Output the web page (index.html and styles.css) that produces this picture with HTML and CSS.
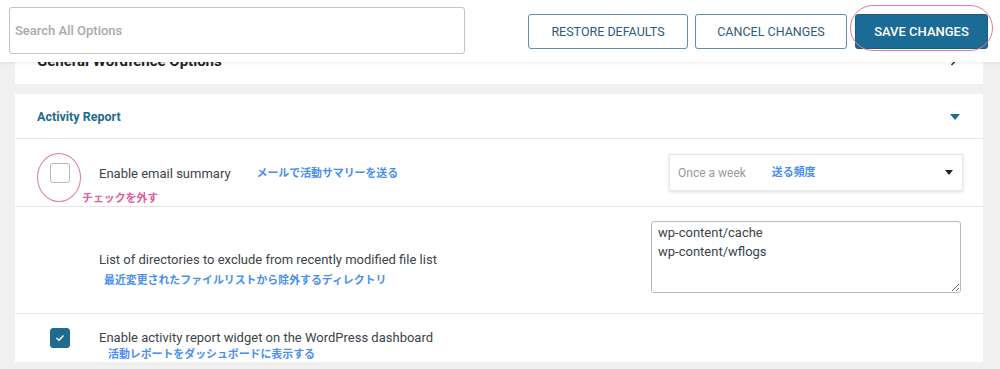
FILE: index.html
```html
<!DOCTYPE html>
<html lang="en">
  <head>
    <meta charset="UTF-8" />
    <meta name="viewport" content="width=device-width, initial-scale=1.0" />
    <title>Wordfence Options</title>
    <link rel="stylesheet" href="styles.css">
  </head>
  <body>
    <header class="topbar">
      <input class="search" type="text" placeholder="Search All Options" />
      <div class="actions">
        <button class="btn btn-restore">RESTORE DEFAULTS</button>
        <button class="btn btn-cancel">CANCEL CHANGES</button>
        <div class="save-wrap">
          <button class="btn btn-save">SAVE CHANGES</button>
          <span class="ring ring-save"></span>
        </div>
      </div>
    </header>

    <main class="content">
      <section class="card card-peek">
        <div class="peek-title">
          <span>General Wordfence Options</span>
          <svg class="chevron" width="8" height="12" viewBox="0 0 8 12"><path d="M1.5 1 L6.5 6 L1.5 11" fill="none" stroke="#333" stroke-width="1.6"/></svg>
        </div>
      </section>

      <section class="card">
        <div class="card-header">
          <h2>Activity Report</h2>
          <svg class="caret" width="10" height="6" viewBox="0 0 10 6"><path d="M0 0 H10 L5 6 Z" fill="#1f6b8e"/></svg>
        </div>

        <div class="row row-summary">
          <div class="check-cell">
            <span class="checkbox"></span>
            <span class="ring ring-check"></span>
            <span class="note note-pink">チェックを外す</span>
          </div>
          <div class="label">Enable email summary<span class="note note-inline">メールで活動サマリーを送る</span></div>
          <div class="select">
            <span class="select-value">Once a week</span>
            <span class="note note-select">送る頻度</span>
            <svg class="select-caret" width="8" height="5" viewBox="0 0 8 5"><path d="M0 0 H8 L4 5 Z" fill="#222"/></svg>
          </div>
        </div>

        <div class="row row-dirs">
          <div class="label label-stack">
            List of directories to exclude from recently modified file list
            <span class="note note-below">最近変更されたファイルリストから除外するディレクトリ</span>
          </div>
          <textarea class="dirs">wp-content/cache
wp-content/wflogs</textarea>
        </div>

        <div class="row row-widget">
          <div class="check-cell">
            <span class="checkbox checked">
              <svg width="10" height="8" viewBox="0 0 10 8"><path d="M1.5 4 L4 6.3 L8.5 1.5" fill="none" stroke="#fff" stroke-width="1.5"/></svg>
            </span>
          </div>
          <div class="label label-stack">
            Enable activity report widget on the WordPress dashboard
            <span class="note note-below note-widget">活動レポートをダッシュボードに表示する</span>
          </div>
        </div>
      </section>
    </main>
  </body>
</html>
```

FILE: styles.css
```css
body {
  margin: 0;
  background-color: #f0f0f1;
  font-family: Roboto, "Liberation Sans", "Noto Sans CJK JP", sans-serif;
  color: #3c434a;
  overflow: hidden;
}
.topbar {
  position: relative;
  z-index: 2;
  height: 62px;
  box-sizing: border-box;
  display: flex;
  align-items: center;
  padding: 0 12px 0 9px;
  background-color: #fff;
  box-shadow: 0 1px 3px rgba(0, 0, 0, 0.08);
}
.search {
  width: 456px;
  height: 47px;
  box-sizing: border-box;
  margin-top: -1px;
  padding: 0 5px;
  border: 1px solid #c3c4c7;
  border-radius: 3px;
  font-family: Roboto, sans-serif;
  font-size: 13px;
  font-weight: 500;
}
.search::placeholder {
  color: #a7aaad;
}
.actions {
  margin-left: auto;
  display: flex;
  align-items: center;
  gap: 7px;
}
.btn {
  height: 35px;
  box-sizing: border-box;
  border: 1px solid #5e8fad;
  border-radius: 3px;
  background-color: #fff;
  color: #2a5c7d;
  font-family: Roboto, sans-serif;
  font-size: 12.5px;
  padding: 0;
  cursor: pointer;
}
.btn-restore {
  width: 160px;
}
.btn-cancel {
  width: 152px;
}
.save-wrap {
  position: relative;
  margin-left: 1px;
}
.btn-save {
  display: block;
  width: 133px;
  background-color: #1a6b96;
  border-color: #175d82;
  color: #fff;
  font-size: 13px;
  font-weight: 500;
}
.ring {
  position: absolute;
  border: 1.5px solid #e07aa6;
  border-radius: 50%;
  pointer-events: none;
}
.ring-save {
  left: -5px;
  right: -5px;
  top: -9px;
  bottom: -2px;
  border-radius: 24px;
}

.content {
  padding: 0 17px 20px 15px;
}
.card {
  background-color: #fff;
  margin-bottom: 10px;
}
.card-peek {
  margin-top: -18px;
  height: 40px;
  box-sizing: border-box;
  padding: 8px 25px 0 22px;
}
.peek-title {
  display: flex;
  align-items: center;
  justify-content: space-between;
  line-height: 18px;
  font-size: 15px;
  font-weight: 700;
  color: #222;
}
.chevron {
  margin-top: -3px;
}
.card-header {
  height: 45px;
  box-sizing: border-box;
  display: flex;
  align-items: center;
  justify-content: space-between;
  padding: 0 23px 0 22px;
  border-bottom: 1px solid #e6e6e6;
}
.card-header h2 {
  margin: 0;
  font-size: 12.5px;
  font-weight: 700;
  color: #1f6b8e;
}
.caret {
  margin-top: 2px;
}
.row {
  display: flex;
  align-items: center;
  padding: 0 20px 0 35px;
  border-bottom: 1px solid #e6e6e6;
}
.row:last-child {
  border-bottom: none;
}
.row-summary {
  height: 67px;
}
.row-dirs {
  height: 106px;
  padding-left: 84px;
  padding-right: 22px;
}
.row-widget {
  height: 48px;
}
.check-cell {
  position: relative;
  width: 49px;
  flex-shrink: 0;
  align-self: center;
  height: 20px;
}
.checkbox {
  display: flex;
  align-items: center;
  justify-content: center;
  width: 20px;
  height: 20px;
  box-sizing: border-box;
  border: 1px solid #b4b9be;
  border-radius: 3px;
  background-color: #fff;
}
.checkbox.checked {
  background-color: #1f6b90;
  border-color: #1f6b90;
}
.ring-check {
  left: -13px;
  top: -10px;
  width: 44px;
  height: 49px;
  box-sizing: border-box;
}
.label {
  position: relative;
  font-size: 13px;
  line-height: 16px;
  color: #3c434a;
}
.note {
  font-family: "Noto Sans CJK JP", sans-serif;
  font-size: 10.9px;
  font-weight: 700;
  color: #4a8ef0;
  white-space: nowrap;
}
.note-pink {
  position: absolute;
  left: 32px;
  top: 26px;
  color: #e0609a;
}
.note-inline {
  margin-left: 26px;
  vertical-align: 1px;
}
.note-below {
  position: absolute;
  left: 5px;
  top: 19px;
}
.note-widget {
  left: 9px;
  top: 15px;
}
.select {
  position: relative;
  margin-left: auto;
  width: 294px;
  height: 37px;
  box-sizing: border-box;
  display: flex;
  align-items: center;
  padding: 0 9px 0 8px;
  border: 1px solid #e8e8e8;
  box-shadow: 0 1px 3px rgba(0, 0, 0, 0.14);
  font-size: 12px;
  color: #9a9a9a;
}
.note-select {
  margin-left: 26px;
  margin-top: -3px;
}
.select-caret {
  margin-left: auto;
}
.dirs {
  margin-left: auto;
  width: 310px;
  height: 72px;
  box-sizing: border-box;
  margin-top: -7px;
  padding: 1px 6px;
  border: 1px solid #b4b9be;
  border-radius: 3px;
  font-family: Roboto, sans-serif;
  font-size: 13px;
  line-height: 19px;
  color: #3c434a;
}
```
